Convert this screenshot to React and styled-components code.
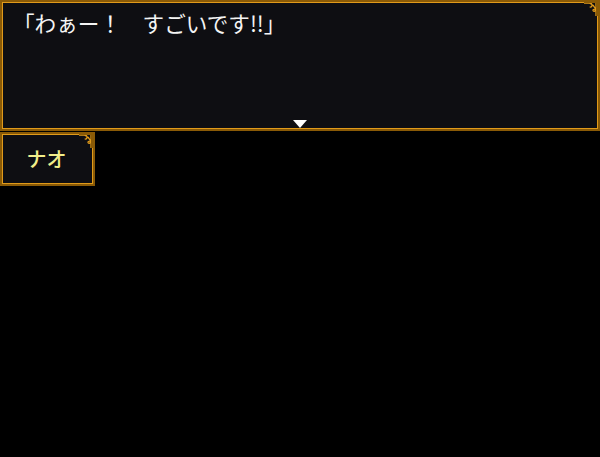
import React from "react";
import styled, { createGlobalStyle } from "styled-components";

const Global = createGlobalStyle`
  html, body { margin: 0; padding: 0; background: #000; }
  body { width: 600px; height: 457px; overflow: hidden; }
`;

const Screen = styled.div`
  width: 600px;
  height: 457px;
  background: #000;
  display: flex;
  flex-direction: column;
  gap: 1px;
  font-family: "Noto Sans CJK JP", "Noto Sans", sans-serif;
`;

const Frame = styled.div`
  position: relative;
  box-sizing: border-box;
  background: #0e0e12;
  border: 2px solid #8a5a06;
  box-shadow: inset 0 0 0 1px #e09a1a;
`;

const Dialog = styled(Frame)`
  width: 600px;
  height: 131px;
  padding: 5px 12px 0 11px;
  display: flex;
  flex-direction: column;
  align-items: stretch;
`;

const Line = styled.div`
  color: #f4f4f4;
  font-size: 21.6px;
  line-height: 32px;
  white-space: pre;
`;

const Spacer = styled.div`
  flex: 1;
`;

const Arrow = styled.div`
  align-self: center;
  width: 0;
  height: 0;
  border-left: 7px solid transparent;
  border-right: 7px solid transparent;
  border-top: 8px solid #fff;
  margin-bottom: 1px;
`;

const NameBox = styled(Frame)`
  width: 95px;
  height: 54px;
  display: flex;
  align-items: center;
  justify-content: center;
`;

const Name = styled.span`
  color: #f2ee8a;
  font-size: 20px;
  font-weight: 500;
  line-height: 1;
  margin-left: -2px;
`;

const Ornament = styled.svg`
  position: absolute;
  top: 0;
  right: 0;
  width: 14px;
  height: 14px;
`;

function Corner() {
  return (
    <Ornament viewBox="0 0 14 14">
      <rect x="0" y="0" width="14" height="14" fill="#0e0e12" />
      <path
        d="M0 1 H5 C7 1 8 2 8 3.5 C8 5 6.5 5.5 5.8 4.6 M5 1 C8 2 10 4 11 6 C12 8.5 10.5 10 9.3 9 C8.5 8.2 9.5 7 10.5 7.6 M12 0 V14"
        fill="none"
        stroke="#e09a1a"
        strokeWidth="1.3"
      />
      <path d="M13 0 V14 M0 0 H14" fill="none" stroke="#8a5a06" strokeWidth="2" />
    </Ornament>
  );
}

export default function App() {
  return (
    <>
      <Global />
      <Screen>
        <Dialog>
          <Corner />
          <Line>「わぁー！　すごいです!!」</Line>
          <Spacer />
          <Arrow />
        </Dialog>
        <NameBox>
          <Corner />
          <Name>ナオ</Name>
        </NameBox>
      </Screen>
    </>
  );
}
